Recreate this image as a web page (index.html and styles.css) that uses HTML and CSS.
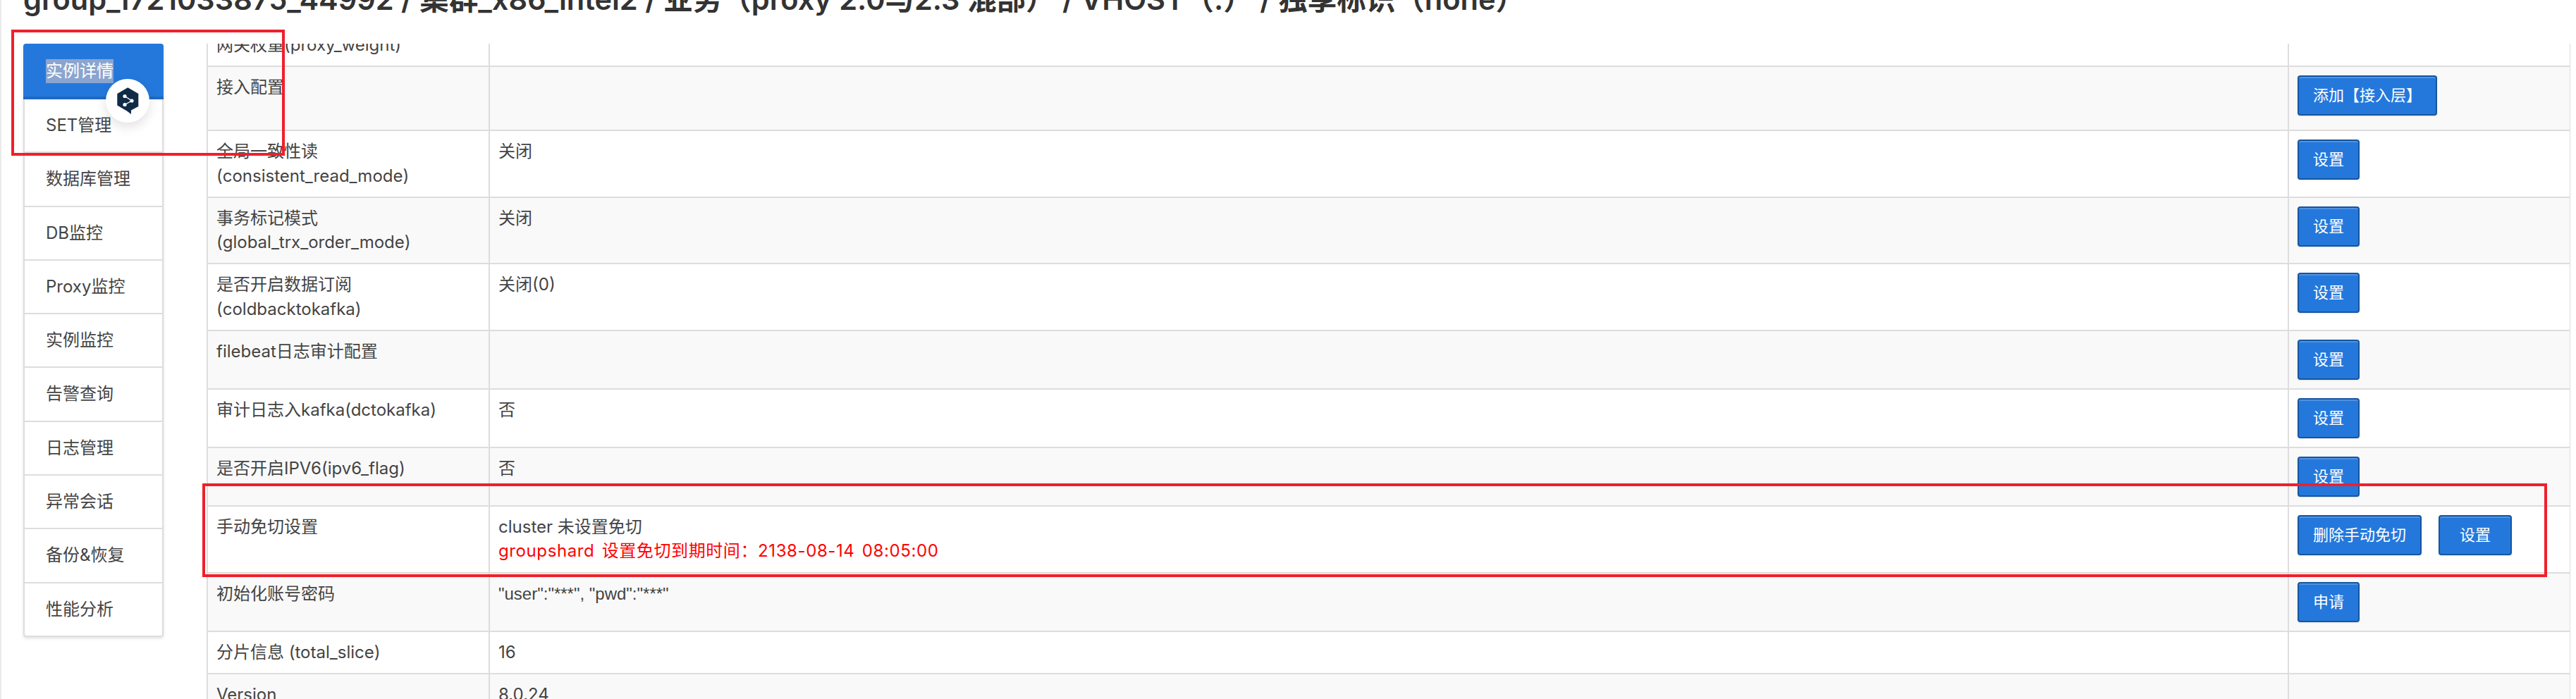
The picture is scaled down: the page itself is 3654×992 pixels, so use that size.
FILE: index.html
```html
<!DOCTYPE html>
<html lang="zh">
<head>
<meta charset="utf-8">
<title>实例详情</title>
<link rel="stylesheet" href="styles.css">
</head>
<body>
<div class="page">
  <h1 class="title">group_1721033875_44992 / 集群_x86_intel2 / 业务（proxy 2.0与2.3 混部） / VHOST（.） / 独享标识（none）</h1>
  <div class="main">
    <nav class="menu">
      <a class="menu-item active"><span class="selected">实例详情</span></a>
      <a class="menu-item">SET管理</a>
      <a class="menu-item">数据库管理</a>
      <a class="menu-item">DB监控</a>
      <a class="menu-item">Proxy监控</a>
      <a class="menu-item">实例监控</a>
      <a class="menu-item">告警查询</a>
      <a class="menu-item">日志管理</a>
      <a class="menu-item">异常会话</a>
      <a class="menu-item">备份&amp;恢复</a>
      <a class="menu-item">性能分析</a>
    </nav>
    <div class="table-wrap">
      <table class="info">
        <colgroup><col class="col-name"><col class="col-value"><col class="col-action"></colgroup>
        <tbody>
          <tr><td>网关权重(proxy_weight)</td><td></td><td></td></tr>
          <tr><td>接入配置</td><td></td><td><button class="btn btn-gap">添加【接入层】</button></td></tr>
          <tr><td>全局一致性读<br>(consistent_read_mode)</td><td>关闭</td><td><button class="btn">设置</button></td></tr>
          <tr><td>事务标记模式<br>(global_trx_order_mode)</td><td>关闭</td><td><button class="btn">设置</button></td></tr>
          <tr><td>是否开启数据订阅<br>(coldbacktokafka)</td><td>关闭(0)</td><td><button class="btn">设置</button></td></tr>
          <tr><td>filebeat日志审计配置</td><td></td><td><button class="btn">设置</button></td></tr>
          <tr><td>审计日志入kafka(dctokafka)</td><td>否</td><td><button class="btn">设置</button></td></tr>
          <tr><td>是否开启IPV6(ipv6_flag)</td><td>否</td><td><button class="btn">设置</button></td></tr>
          <tr><td>手动免切设置</td><td>cluster 未设置免切<br><span class="danger">groupshard 设置免切到期时间：2138-08-14 08:05:00</span></td><td><button class="btn">删除手动免切</button><button class="btn btn-wide">设置</button></td></tr>
          <tr><td>初始化账号密码</td><td class="credentials">"user":"***", "pwd":"***"</td><td><button class="btn">申请</button></td></tr>
          <tr><td>分片信息 (total_slice)</td><td>16</td><td></td></tr>
          <tr><td>Version</td><td>8.0.24</td><td></td></tr>
        </tbody>
      </table>
    </div>
  </div>
  <div class="mark mark-menu"></div>
  <div class="mark mark-row"></div>
  <div class="badge">
    <svg class="badge-icon" viewBox="0 0 31 38" aria-hidden="true">
      <path class="hex" d="M15.3 0.3 L30.3 9 L30.3 27 L20 32.6 L20 38 L14 33.4 L0.3 25.5 L0.3 9 Z"/>
      <path class="link" d="M11 12.5 L21 19 L11 24.5"/>
      <circle class="node" cx="11" cy="12.5" r="2.6"/>
      <circle class="node" cx="21" cy="19" r="2.6"/>
      <circle class="node" cx="11" cy="24.5" r="2.6"/>
    </svg>
  </div>
</div>
</body>
</html>
```
FILE: styles.css
```css
* { box-sizing: border-box; }
html, body { margin: 0; padding: 0; background: #fff; }
body {
  font-family: Inter, "Noto Sans CJK SC", sans-serif;
  font-size: 24px;
  line-height: 34.28px;
  color: #444;
}
.page {
  position: relative;
  width: 3654px;
  height: 992px;
  overflow: hidden;
  border-left: 2px solid #eaeaea;
}
.title {
  margin: -25px 0 0 31px;
  height: 87px;
  font-family: Inter, "Noto Sans CJK SC", sans-serif;
  font-size: 41.5px;
  line-height: 48px;
  font-weight: 600;
  color: #333;
  white-space: nowrap;
}
.main {
  display: flex;
  height: 930px;
}
.menu {
  flex: 0 0 199px;
  margin-left: 31px;
  align-self: flex-start;
  border-radius: 4px;
  box-shadow: 0 2px 4px rgba(0, 0, 0, 0.12);
}
.menu-item {
  display: block;
  padding: 20px 30px;
  margin-bottom: -2px;
  border: 2px solid #ddd;
  background: #fff;
  color: #444;
}
.menu-item:last-child { margin-bottom: 0; border-radius: 0 0 4px 4px; }
.menu-item.active {
  position: relative;
  border: 0;
  border-bottom: 4px solid #1f69c2;
  padding: 22px 32px 20px;
  height: 79px;
  background: #2478dc;
  color: #fff;
  border-radius: 4px 4px 0 0;
}
.selected {
  display: inline-block;
  background: #8aa5cf;
}
.table-wrap {
  flex: 0 0 auto;
  margin-left: 61px;
  width: 3353px;
  overflow: hidden;
}
.info {
  table-layout: fixed;
  width: 3352px;
  margin-top: -29px;
  border-collapse: collapse;
}
.col-name { width: 400px; }
.col-value { width: 2552px; }
.col-action { width: 400px; }
.info td {
  padding: 12px;
  border: 2px solid #ddd;
  vertical-align: top;
}
.info tr:nth-child(even) td { background: #f9f9f9; }
.info td.credentials { font-family: "Liberation Sans", "Noto Sans CJK SC", sans-serif; }
.danger { color: #f00; letter-spacing: 0.6px; word-spacing: 3px; }
.btn {
  display: inline-block;
  vertical-align: top;
  height: 57px;
  padding: 10px 20px;
  font-family: Inter, "Noto Sans CJK SC", sans-serif;
  font-size: 22px;
  line-height: 33px;
  color: #fff;
  background: #2478dc;
  border: 2px solid #17559f;
  border-radius: 4px;
  box-shadow: inset 0 2px 0 rgba(255, 255, 255, 0.2), 0 1px 2px rgba(0, 0, 0, 0.1);
}
.btn-gap { margin-bottom: 8px; }
.btn-wide { margin-left: 24px; padding: 10px 28px; }
.mark {
  position: absolute;
  border: 4px solid #f01f2c;
  pointer-events: none;
}
.mark-menu { left: 14px; top: 42px; width: 388px; height: 179px; }
.mark-row { left: 285px; top: 686px; width: 3326px; height: 133px; }
.badge {
  position: absolute;
  left: 148px;
  top: 112px;
  width: 62px;
  height: 62px;
  border-radius: 50%;
  background: #fff;
  box-shadow: 0 6px 16px rgba(0, 0, 0, 0.12);
  display: flex;
  align-items: center;
  justify-content: center;
}
.badge-icon { width: 31px; height: 38px; }
.hex { fill: #0f2b46; }
.link { fill: none; stroke: #fff; stroke-width: 1.4; }
.node { fill: #fff; }
```
